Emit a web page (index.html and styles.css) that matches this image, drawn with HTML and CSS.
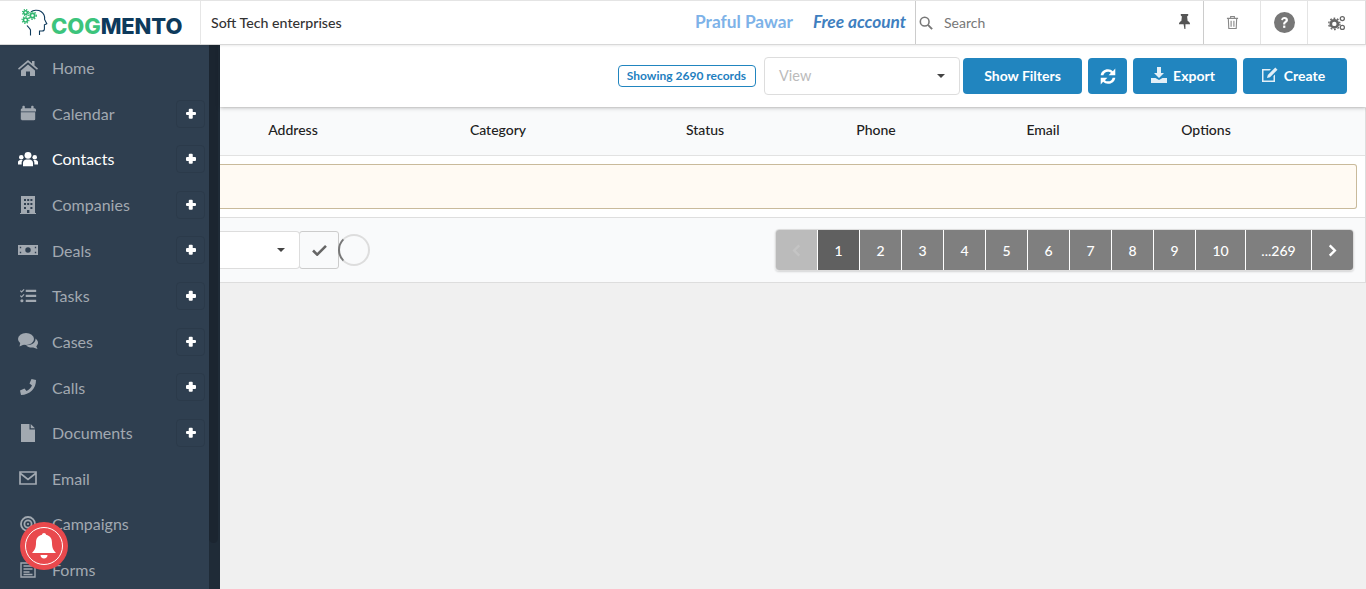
FILE: index.html
```html
<!DOCTYPE html>
<html lang="en">
<head>
  <meta charset="UTF-8" />
  <title>Cogmento CRM</title>
  <link rel="stylesheet" href="styles.css">
</head>
<body>
  <header class="topbar">
    <div class="brand">
      <svg class="brand-head" viewBox="0 0 28 28" width="28" height="28">
        <path d="M10 3C12 1 17 .5 20 2.500c3 2 4 5 3.600 8l2.200 4.300-2.400 1v4.200c0 1.300-1 2-2.300 2H18.500v4" fill="none" stroke="#0e3a5c" stroke-width="1.100"/>
        <path d="M6 16.500c1 1.500 3 2.500 3.500 4.500v5.500" fill="none" stroke="#0e3a5c" stroke-width="1.100"/>
        <circle cx="4.500" cy="3.500" r="1.800" fill="none" stroke="#2fb56e" stroke-width="1.500"/>
        <circle cx="4.500" cy="3.500" r="3" fill="none" stroke="#2fb56e" stroke-width="1.200" stroke-dasharray="1.200 1.200"/>
        <circle cx="11.500" cy="6.500" r="2.200" fill="none" stroke="#2fb56e" stroke-width="1.800"/>
        <circle cx="11.500" cy="6.500" r="3.800" fill="none" stroke="#2fb56e" stroke-width="1.300" stroke-dasharray="1.400 1.400"/>
        <circle cx="4.500" cy="11" r="2" fill="none" stroke="#2fb56e" stroke-width="1.600"/>
        <circle cx="4.500" cy="11" r="3.400" fill="none" stroke="#2fb56e" stroke-width="1.200" stroke-dasharray="1.300 1.300"/>
      </svg>
      <span class="brand-name"><span class="brand-cog">COG</span>MENTO</span>
    </div>
    <div class="company">Soft Tech enterprises</div>
    <div class="user-name">Praful Pawar</div>
    <div class="account">Free account</div>
    <div class="search">
      <svg viewBox="0 0 16 16" width="14" height="14"><circle cx="6.500" cy="6.500" r="5" fill="none" stroke="#777" stroke-width="1.800"/><path d="M10.200 10.200 15 15" stroke="#777" stroke-width="2.200"/></svg>
      <span>Search</span>
      <svg class="pin" viewBox="0 0 14 16" width="13" height="15"><path d="M3 0h8v1.500L9.800 2.500l.6 5c1.500.7 2.600 1.900 2.600 3.500H8v5L7 16.500 6 11H1c0-1.600 1.100-2.800 2.600-3.500l.6-5L3 1.500z" fill="#555"/></svg>
    </div>
    <div class="tool tool-trash">
      <svg viewBox="0 0 14 16" width="13" height="15"><path d="M1 3.500h12M5 3V1.500h4V3M2.500 3.500l.5 11h8l.5-11M5.500 6v6.500M8.500 6v6.500" fill="none" stroke="#888" stroke-width="1.200"/></svg>
    </div>
    <div class="tool tool-help">
      <svg viewBox="0 0 20 20" width="21" height="21"><circle cx="10" cy="10" r="10" fill="#777"/><path d="M6.800 7.600C7 5.700 8.300 4.800 10 4.800c1.900 0 3.300 1.100 3.300 2.800 0 2.400-2.600 2.300-2.600 4.200H8.700c0-2.900 2.400-2.800 2.400-4.100 0-.6-.5-1-1.200-1-.8 0-1.200.4-1.400 1.200z" fill="#fff"/><rect x="8.700" y="12.900" width="2.100" height="2.200" fill="#fff"/></svg>
    </div>
    <div class="tool tool-gears">
      <svg viewBox="0 0 20 18" width="18" height="16"><circle cx="7" cy="10" r="4" fill="none" stroke="#666" stroke-width="3"/><circle cx="7" cy="10" r="6.300" fill="none" stroke="#666" stroke-width="1.500" stroke-dasharray="2 2"/><circle cx="16" cy="4" r="2.300" fill="none" stroke="#666" stroke-width="1.400"/><circle cx="16" cy="14" r="2.300" fill="none" stroke="#666" stroke-width="1.400"/></svg>
    </div>
  </header>

  <div class="layout">
    <aside class="sidebar">
      <nav class="menu">
        <a class="menu-item"><svg class="menu-icon" viewBox="0 0 20 16"><path d="M10 0 0 8.500l1 1.200L10 2.200l9 7.500 1-1.200-3.500-3V1h-2.500v2.400zM3 10.500V16h5v-4.500h4V16h5v-5.500L10 4.500z"/></svg><span>Home</span></a>
        <a class="menu-item"><svg class="menu-icon" viewBox="-2.500 -.5 25 19"><path d="M3 3V1c0-.5.5-1 1-1h1c.5 0 1 .5 1 1v2h8V1c0-.5.5-1 1-1h1c.5 0 1 .5 1 1v2h1c1 0 2 1 2 2v2H1V5c0-1 1-2 2-2zM1 8h18v8.500c0 1-.5 1.500-1.500 1.500h-15C1.500 18 1 17.500 1 16.500z"/></svg><span>Calendar</span><b class="plus"></b></a>
        <a class="menu-item active"><svg class="menu-icon" viewBox="0 0 22 16"><circle cx="11" cy="4" r="3.800"/><circle cx="3.600" cy="6" r="2.500"/><circle cx="18.400" cy="6" r="2.500"/><path d="M5.500 16v-3.500C5.500 10 7.500 8.500 9.500 8.500h3c2 0 4 1.500 4 4V16zM0 14v-2.500C0 10 1.200 9 2.500 9h2.700c-.9 1-1.200 2.200-1.200 3.500V14zM22 14v-2.500C22 10 20.800 9 19.500 9h-2.700c.9 1 1.200 2.200 1.200 3.500V14z"/></svg><span>Contacts</span><b class="plus"></b></a>
        <a class="menu-item"><svg class="menu-icon" viewBox="0 0 16 18"><path fill-rule="evenodd" d="M1 0h14v17h1v1H0v-1h1zM4 3v2h2V3zm3.200 0v2h2V3zm3.200 0v2h2V3zM4 7v2h2V7zm3.200 0v2h2V7zm3.200 0v2h2V7zM4 11v2h2v-2zm6.400 0v2h2v-2zM7 14v3h2.400v-3z"/></svg><span>Companies</span><b class="plus"></b></a>
        <a class="menu-item"><svg class="menu-icon" viewBox="0 0 22 11"><path fill-rule="evenodd" d="M0 0h22v11H0zM11 2.500a3 3 0 1 0 0 6 3 3 0 0 0 0-6zM2 2v1.500h1.500V2zm16.500 0v1.500H20V2zM2 7.500V9h1.500V7.500zm16.500 0V9H20V7.500z"/></svg><span>Deals</span><b class="plus"></b></a>
        <a class="menu-item"><svg class="menu-icon" viewBox="-2 -1.500 22 19.800"><path d="M6.500 1.500H18V4H6.500zM6.500 7H18v2.500H6.500zM6.500 12.500H18V15H6.500z"/><path d="M.5 2.500 2 4l2.700-3M.5 8 2 9.500l2.700-3" fill="none" stroke="#a2a9b1" stroke-width="1.300"/><circle cx="2.300" cy="13.700" r="1.700"/></svg><span>Tasks</span><b class="plus"></b></a>
        <a class="menu-item"><svg class="menu-icon" viewBox="0 0 20 16"><ellipse cx="8" cy="6" rx="8" ry="6"/><path d="M2.500 9 1.500 13.500 7 11z"/><path d="M17.500 5.500c1.500 1.200 2.500 2.700 2.500 4.300 0 1.300-.7 2.500-1.700 3.500l1.200 2.700-4.300-1.600c-2.500.5-5.500-.3-7.200-2.200 4.800.4 10-2.300 9.500-6.700z"/></svg><span>Cases</span><b class="plus"></b></a>
        <a class="menu-item"><svg class="menu-icon" viewBox="-2 -1 20 18"><path d="M11.500 0 16 1c.2 8.500-6.500 15-15 15L0 11.500l4.500-2 2 2.500c2.500-1.200 4.300-3 5.500-5.500L9.500 4.500z"/></svg><span>Calls</span><b class="plus"></b></a>
        <a class="menu-item"><svg class="menu-icon" viewBox="0 0 14 18"><path d="M0 0h8.500v5.500H14V18H0zM9.700 0 14 4.300H9.700z"/></svg><span>Documents</span><b class="plus"></b></a>
        <a class="menu-item"><svg class="menu-icon" viewBox="-1 -2 20 18"><path d="M1 1h16v12H1zM1.500 2.500 9 8.500l7.500-6" fill="none" stroke="#a2a9b1" stroke-width="1.700"/></svg><span>Email</span></a>
        <a class="menu-item"><svg class="menu-icon" viewBox="-1 -1 20 20"><circle cx="9" cy="9" r="7.800" fill="none" stroke="#a2a9b1" stroke-width="2"/><circle cx="9" cy="9" r="4" fill="none" stroke="#a2a9b1" stroke-width="2"/><circle cx="9" cy="9" r="1.200"/></svg><span>Campaigns</span></a>
        <a class="menu-item"><svg class="menu-icon" viewBox="-2 -1 20 18"><path d="M1 1h14v14H1zM3.500 4h9M3.500 7h9M3.500 10h6M3.500 12.500h9" fill="none" stroke="#a2a9b1" stroke-width="1.400"/></svg><span>Forms</span></a>
      </nav>
      <div class="side-scroll"><div class="side-thumb"></div></div>
      <div class="bell">
        <div class="bell-ring">
          <svg viewBox="0 0 24 26" width="24" height="26"><path d="M12 0c1 0 2 .8 2 1.800C18.500 2.800 20 6 20 10c0 5 1.500 7.500 4 10H0c2.500-2.500 4-5 4-10 0-4 1.500-7.200 6-8.200C10 .8 11 0 12 0zM8.500 22h7c0 2-1.500 3.500-3.500 3.500S8.500 24 8.500 22z" fill="#fff"/></svg>
        </div>
      </div>
    </aside>

    <main class="content">
      <section class="toolbar">
        <span class="records">Showing 2690 records</span>
        <div class="select select-view"><span>View</span><i class="caret"></i></div>
        <button class="btn btn-filters">Show Filters</button>
        <button class="btn btn-refresh">
          <svg viewBox="1.500 1 13 14" width="16" height="17"><path d="M2 7C2.300 4 4.800 2 8 2c1.700 0 3 .6 4 1.600L14 1.500V7H8.500l2-2C9.800 4.300 9 4 8 4 6 4 4.500 5.200 4.200 7zM14 9c-.3 3-2.800 5-6 5-1.700 0-3-.6-4-1.600L2 14.500V9h5.500l-2 2c.7.700 1.500 1 2.500 1 2 0 3.500-1.200 3.800-3z" fill="#fff"/></svg>
        </button>
        <button class="btn btn-export">
          <svg viewBox="0 0 16 16" width="16" height="16"><path d="M6 0h4v6h3L8 11 3 6h3zM0 11h4.500L8 13l3.500-2H16v5H0z" fill="#e3eff7"/></svg>
          Export
        </button>
        <button class="btn btn-create">
          <svg viewBox="0 0 17 16" width="17" height="16"><path d="M2 2h8L8.500 3.500H2.500v10h10V9L14 7.500V15H1V2z" fill="#e3eff7"/><path d="M14.300.5 16.500 2.700 9 10.200l-3 .8.800-3z" fill="#e3eff7"/></svg>
          Create
        </button>
      </section>

      <section class="table-card">
        <div class="table-head">
          <span class="th th-address">Address</span>
          <span class="th th-category">Category</span>
          <span class="th th-status">Status</span>
          <span class="th th-phone">Phone</span>
          <span class="th th-email">Email</span>
          <span class="th th-options">Options</span>
        </div>
        <div class="table-body">
          <div class="notice"></div>
        </div>
        <div class="table-foot">
          <div class="select select-action"><i class="caret"></i></div>
          <button class="check-btn">
            <svg viewBox="0 0 16 13" width="15" height="12"><path d="M1 7l4.500 4.500L15 2" fill="none" stroke="#666" stroke-width="2.800"/></svg>
          </button>
          <div class="spinner"></div>
          <div class="pagination">
            <span class="page page-prev">
              <svg viewBox="0 0 9 14" width="9" height="13"><path d="M7.500 1.500 2 7l5.500 5.500" fill="none" stroke="#c4c4c4" stroke-width="2.600"/></svg>
            </span>
            <span class="page page-current">1</span>
            <span class="page">2</span>
            <span class="page">3</span>
            <span class="page">4</span>
            <span class="page">5</span>
            <span class="page">6</span>
            <span class="page">7</span>
            <span class="page">8</span>
            <span class="page">9</span>
            <span class="page page-wide">10</span>
            <span class="page page-last">...269</span>
            <span class="page page-next">
              <svg viewBox="0 0 9 14" width="9" height="13"><path d="M1.500 1.500 7 7l-5.500 5.500" fill="none" stroke="#fff" stroke-width="2.600"/></svg>
            </span>
          </div>
        </div>
      </section>
    </main>
  </div>
</body>
</html>
```

FILE: styles.css
```css
* {
  box-sizing: border-box;
}

html, body {
  height: 100%;
}

body {
  margin: 0;
  overflow: hidden;
  background: #f0f0f0;
  color: #212121;
  font-family: Lato, "Open Sans", sans-serif;
  font-size: 14px;
}

/* top bar */
.topbar {
  display: flex;
  align-items: center;
  height: 45px;
  background: #fff;
  border-top: 1px solid #e4e4e4;
  border-bottom: 1px solid #d8d8d8;
  border-right: 1px solid #ddd;
  box-shadow: 0 1px 2px rgba(0,0,0,0.08);
  position: relative;
  z-index: 3;
}

.brand {
  display: flex;
  align-items: center;
  flex: none;
  width: 201px;
  height: 100%;
  padding: 0 0 0 21px;
  border-right: 1px solid #e6e6e6;
}

.brand-head {
  margin: 0 2px 0 0;
}

.brand-name {
  font-family: Inter, "Open Sans", sans-serif;
  font-size: 22px;
  font-weight: 800;
  letter-spacing: -0.100px;
  line-height: 1;
  margin-top: 7px;
  color: #0e3a5c;
}

.brand-cog {
  color: #3cc47c;
}

.company {
  width: 485px;
  padding-left: 10px;
  font-size: 14.200px;
  font-weight: 500;
  color: #333;
}

.user-name {
  width: 117px;
  padding: 0 0 2px 9px;
  font-size: 17.300px;
  font-weight: 700;
  color: #7db2e8;
  white-space: nowrap;
}

.account {
  width: 112px;
  padding: 0 0 2px 10px;
  font-size: 17.300px;
  font-weight: 700;
  font-style: italic;
  color: #3f7fc0;
  white-space: nowrap;
}

.search {
  display: flex;
  align-items: center;
  width: 289px;
  height: 100%;
  padding-left: 3px;
  border-left: 1px solid #ccc;
  border-right: 1px solid #ccc;
  color: #777;
  font-size: 14px;
}

.search span {
  margin-left: 11px;
  flex: 1;
}

.pin {
  margin-right: 12px;
  margin-bottom: 2px;
}

.tool {
  display: flex;
  align-items: center;
  justify-content: center;
  height: 100%;
  border-right: 1px solid #e4e4e4;
}

.tool-trash {
  width: 57px;
}

.tool-help {
  width: 47px;
}

.tool-gears {
  width: 57px;
  border-right: 0;
}

/* sidebar */
.layout {
  display: flex;
  height: calc(100vh - 45px);
}

.sidebar {
  position: relative;
  display: flex;
  flex: none;
  width: 220px;
  height: 100%;
  overflow: hidden;
  background: #2f3f50;
}

.menu {
  width: 209px;
  flex: none;
  margin-top: -0.100px;
}

.menu-item {
  position: relative;
  display: flex;
  align-items: center;
  height: 45.640px;
  color: #a2a9b1;
  font-size: 16px;
}

.menu-item.active {
  color: #fff;
}

.menu-icon {
  flex: none;
  width: 20px;
  height: 18px;
  margin: 0 14px 0 18px;
  fill: #a2a9b1;
}

.active .menu-icon {
  fill: #fff;
}

.plus {
  position: absolute;
  right: 4px;
  top: 9px;
  width: 29px;
  height: 28px;
  border: 1px solid #2b3a4a;
  border-radius: 4px;
}

.plus::before,
.plus::after {
  content: "";
  position: absolute;
  left: 9px;
  top: 11px;
  width: 10px;
  height: 3.500px;
  border-radius: 1px;
  background: #fff;
}

.plus::after {
  transform: rotate(90deg);
}

.side-scroll {
  flex: 1;
  background: #1f2b37;
}

.side-thumb {
  height: 498px;
  width: 9px;
  border-radius: 0 0 5px 5px;
  background: #1b2530;
}

.bell {
  position: absolute;
  left: 20px;
  top: 477px;
  width: 48px;
  height: 48px;
  padding: 5px;
  border-radius: 50%;
  background: #e9494d;
}

.bell-ring {
  display: flex;
  align-items: center;
  justify-content: center;
  height: 100%;
  border: 1.500px solid #fff;
  border-radius: 50%;
}

/* main */
.content {
  flex: 1;
  min-width: 0;
}

.toolbar {
  display: flex;
  align-items: center;
  justify-content: flex-end;
  height: 62px;
  padding: 0 19px 0 0;
  background: #fff;
  box-shadow: 0 1px 4px rgba(0,0,0,0.25);
  position: relative;
}

.records {
  padding: 0 9px 0 8px;
  height: 22px;
  line-height: 20px;
  border: 1px solid #2185bf;
  border-radius: 4px;
  color: #1f7fbf;
  font-size: 12px;
  font-weight: 700;
  white-space: nowrap;
}

.select {
  position: relative;
  background: #fff;
  border: 1px solid #ddd;
  border-radius: 4px;
}

.select-view {
  flex: none;
  width: 196px;
  height: 38px;
  margin: 0 3px 0 8px;
  padding-left: 14px;
  line-height: 36px;
  color: #bbb;
  font-size: 14.500px;
}

.caret {
  position: absolute;
  right: 14px;
  top: 16px;
  border-left: 4px solid transparent;
  border-right: 4px solid transparent;
  border-top: 4px solid #444;
}

.btn {
  display: flex;
  flex: none;
  align-items: center;
  justify-content: center;
  gap: 6px;
  height: 36px;
  padding: 0 0 2px;
  border: 0;
  border-radius: 4px;
  background: #2185bf;
  color: #fff;
  font-family: inherit;
  font-size: 14px;
  font-weight: 700;
}

.btn-filters {
  width: 119px;
}

.btn-refresh {
  width: 39px;
  margin-left: 6px;
  padding: 0;
}

.btn-export {
  width: 104px;
  margin-left: 6px;
  padding-right: 4px;
}

.btn-create {
  width: 104px;
  margin-left: 6px;
  padding-right: 4px;
}

/* table */
.table-card {
  border-right: 1px solid #ddd;
  border-bottom: 1px solid #ddd;
  background: #fff;
  margin-top: 1px;
}

.table-head {
  display: flex;
  align-items: center;
  height: 48px;
  padding-bottom: 5px;
  background: #f9fafb;
  border-bottom: 1px solid #e2e2e2;
}

.th {
  font-size: 14px;
  color: #212121;
  font-weight: 500;
  text-align: center;
}

.th-address { width: 146px; }
.th-category { width: 210px; margin-left: 27px; }
.th-status { width: 204px; }
.th-phone { width: 138px; }
.th-email { width: 196px; }
.th-options { width: 130px; }

.table-body {
  height: 62px;
  padding: 8px 0;
  border-bottom: 1px solid #dedede;
}

.notice {
  height: 45px;
  margin-right: 8px;
  background: #fffaf3;
  border: 1px solid #c9ba9b;
  border-left: 0;
  border-radius: 0 3px 3px 0;
}

.table-foot {
  display: flex;
  align-items: center;
  height: 64px;
  padding-right: 11px;
  background: #f9fafb;
}

.select-action {
  width: 80px;
  height: 38px;
  border-left: 0;
  border-radius: 0 4px 4px 0;
}

.check-btn {
  display: flex;
  align-items: center;
  justify-content: center;
  width: 40px;
  height: 38px;
  margin-left: -1px;
  margin-top: -1px;
  padding: 0;
  border: 1px solid #ccc;
  border-radius: 3px;
  background: #f9fafb;
}

.spinner {
  width: 32px;
  height: 32px;
  margin-left: -1px;
  border: 2px solid #ddd;
  border-left-color: #777;
  border-radius: 50%;
}

.pagination {
  display: flex;
  margin-left: auto;
  height: 42px;
  border: 1px solid #ddd;
  border-radius: 4px;
  box-shadow: 0 1px 2px rgba(0,0,0,0.15);
  overflow: hidden;
}

.page {
  display: flex;
  align-items: center;
  justify-content: center;
  width: 42px;
  border-left: 1px solid #fff;
  background: #7f7f7f;
  color: #fff;
  font-size: 14px;
  font-weight: 500;
}

.page-prev {
  border-left: 0;
  width: 41px;
  background: #bbb;
}

.page-current {
  background: #606060;
}

.page-wide {
  width: 50px;
}

.page-last {
  width: 66px;
}
```
